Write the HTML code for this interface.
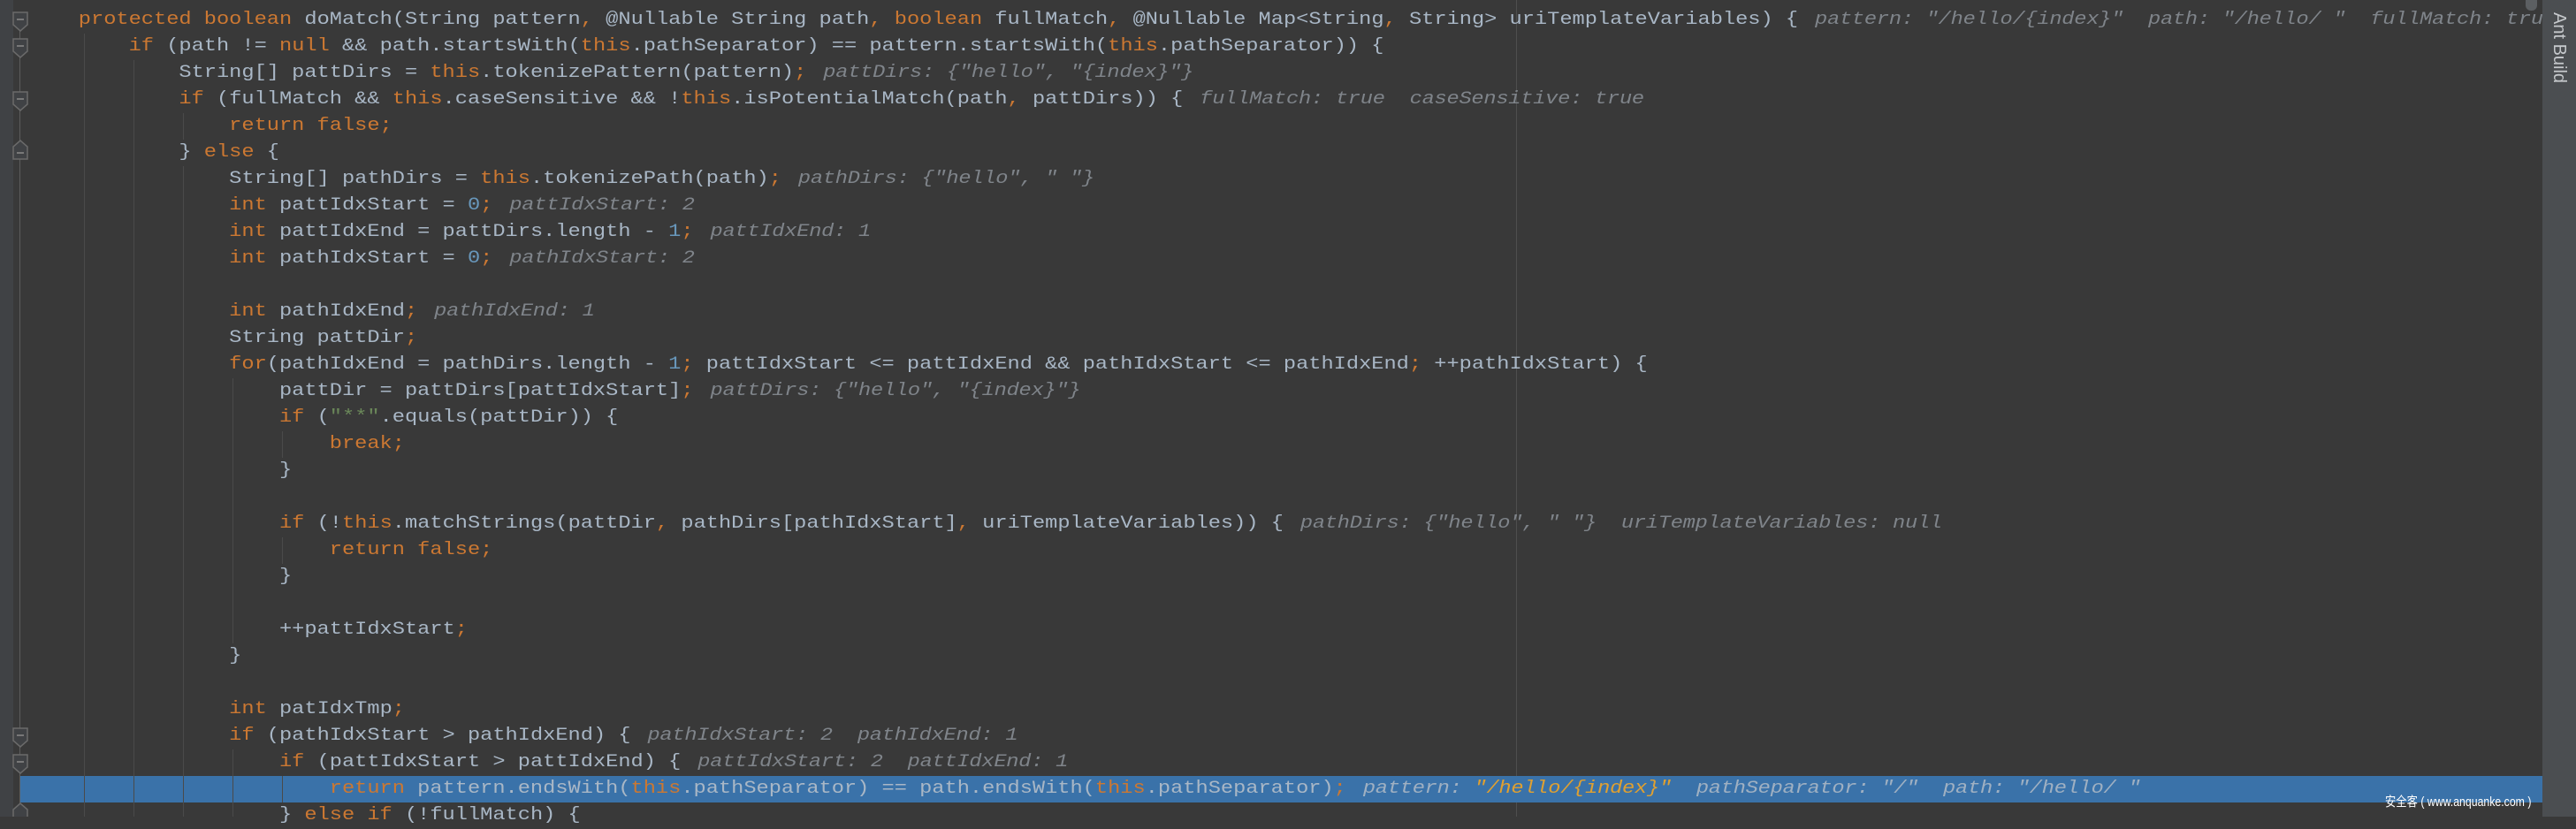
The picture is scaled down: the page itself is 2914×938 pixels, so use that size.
<!DOCTYPE html>
<html><head><meta charset="utf-8"><style>
html,body{margin:0;padding:0;}
body{width:2914px;height:924px;overflow:hidden;background:#393939;position:relative;font-family:"Liberation Mono",monospace;}
#gut{position:absolute;left:0;top:0;width:15px;height:924px;background:#404245;}
#hl{position:absolute;left:23px;top:878px;width:2854px;height:30px;background:#3a72a9;}
.g{position:absolute;width:1px;background:#4a4a4a;}
#code{position:absolute;left:32px;top:8px;transform:scaleX(1.183);transform-origin:0 0;}
.l{position:absolute;left:0;height:30px;line-height:30px;font-size:20px;color:#a9b7c6;white-space:pre;}
.k{color:#cc7832}.n{color:#6897bb}.s{color:#6a8759}
.h{color:#7f848a;font-style:italic;padding-left:4px;letter-spacing:-0.2px}
.hl .h{color:#9fb0c2}.hs{color:#e0a030}
#margin{position:absolute;left:1715px;top:0;width:1px;height:924px;background:#4e4e4e;}
#side{position:absolute;left:2876px;top:0;width:38px;height:924px;background:#4b4e51;}
#side span{position:absolute;left:7px;top:14px;writing-mode:vertical-rl;font-family:"Liberation Sans",sans-serif;font-size:20px;color:#c5c8cb;}
#thumb{position:absolute;left:2857px;top:0;width:13px;height:12px;background:#5c5f62;border-radius:0 0 6px 6px;}
#wm{position:absolute;left:2698px;top:896px;font-family:"Liberation Sans","Noto Sans CJK SC",sans-serif;font-size:15px;color:#fff;transform:scaleX(0.82);transform-origin:0 0;white-space:pre;}
</style></head><body>
<div id="gut"></div>
<div id="margin"></div>
<div id="hl"></div>
<div class="g" style="left:22px;top:24px;height:900px;background:#5d5d5d"></div>
<div class="g" style="left:95px;top:38px;height:886px"></div>
<div class="g" style="left:151px;top:68px;height:856px"></div>
<div class="g" style="left:207px;top:128px;height:30px"></div>
<div class="g" style="left:207px;top:188px;height:736px"></div>
<div class="g" style="left:263px;top:428px;height:300px"></div>
<div class="g" style="left:319px;top:488px;height:30px"></div>
<div class="g" style="left:319px;top:608px;height:30px"></div>
<div class="g" style="left:263px;top:848px;height:76px"></div>
<div class="g" style="left:319px;top:878px;height:30px"></div>
<svg style="position:absolute;left:0;top:0" width="40" height="924">
<g fill="#404245" stroke="#6a6a6a" stroke-width="1.5">
<polygon points="15,14 31,14 31,28 23,35 15,28"/>
<polygon points="15,44 31,44 31,58 23,65 15,58"/>
<polygon points="15,104 31,104 31,118 23,125 15,118"/>
<polygon points="15,166 23,159 31,166 31,180 15,180"/>
<polygon points="15,824 31,824 31,838 23,845 15,838"/>
<polygon points="15,854 31,854 31,868 23,875 15,868"/>
<polygon points="15,916 23,909 31,916 31,930 15,930"/>
</g>
<g stroke="#8a8a8a" stroke-width="1.5">
<line x1="19" y1="22" x2="27" y2="22"/><line x1="19" y1="52" x2="27" y2="52"/><line x1="19" y1="112" x2="27" y2="112"/><line x1="19" y1="173" x2="27" y2="173"/><line x1="19" y1="832" x2="27" y2="832"/><line x1="19" y1="862" x2="27" y2="862"/>
</g></svg>
<div id="code">
<div class="l" style="top:0">    <span class="k">protected boolean</span> doMatch(String pattern<span class="k">,</span> @Nullable String path<span class="k">,</span> <span class="k">boolean</span> fullMatch<span class="k">,</span> @Nullable Map&lt;String<span class="k">,</span> String&gt; uriTemplateVariables) { <span class="h">pattern: "/hello/{index}"  path: "/hello/ "  fullMatch: true</span></div>
<div class="l" style="top:30px">        <span class="k">if</span> (path != <span class="k">null</span> &amp;&amp; path.startsWith(<span class="k">this</span>.pathSeparator) == pattern.startsWith(<span class="k">this</span>.pathSeparator)) {</div>
<div class="l" style="top:60px">            String[] pattDirs = <span class="k">this</span>.tokenizePattern(pattern)<span class="k">;</span> <span class="h">pattDirs: {"hello", "{index}"}</span></div>
<div class="l" style="top:90px">            <span class="k">if</span> (fullMatch &amp;&amp; <span class="k">this</span>.caseSensitive &amp;&amp; !<span class="k">this</span>.isPotentialMatch(path<span class="k">,</span> pattDirs)) { <span class="h">fullMatch: true  caseSensitive: true</span></div>
<div class="l" style="top:120px">                <span class="k">return false;</span></div>
<div class="l" style="top:150px">            } <span class="k">else</span> {</div>
<div class="l" style="top:180px">                String[] pathDirs = <span class="k">this</span>.tokenizePath(path)<span class="k">;</span> <span class="h">pathDirs: {"hello", " "}</span></div>
<div class="l" style="top:210px">                <span class="k">int</span> pattIdxStart = <span class="n">0</span><span class="k">;</span> <span class="h">pattIdxStart: 2</span></div>
<div class="l" style="top:240px">                <span class="k">int</span> pattIdxEnd = pattDirs.length - <span class="n">1</span><span class="k">;</span> <span class="h">pattIdxEnd: 1</span></div>
<div class="l" style="top:270px">                <span class="k">int</span> pathIdxStart = <span class="n">0</span><span class="k">;</span> <span class="h">pathIdxStart: 2</span></div>
<div class="l" style="top:330px">                <span class="k">int</span> pathIdxEnd<span class="k">;</span> <span class="h">pathIdxEnd: 1</span></div>
<div class="l" style="top:360px">                String pattDir<span class="k">;</span></div>
<div class="l" style="top:390px">                <span class="k">for</span>(pathIdxEnd = pathDirs.length - <span class="n">1</span><span class="k">;</span> pattIdxStart &lt;= pattIdxEnd &amp;&amp; pathIdxStart &lt;= pathIdxEnd<span class="k">;</span> ++pathIdxStart) {</div>
<div class="l" style="top:420px">                    pattDir = pattDirs[pattIdxStart]<span class="k">;</span> <span class="h">pattDirs: {"hello", "{index}"}</span></div>
<div class="l" style="top:450px">                    <span class="k">if</span> (<span class="s">"**"</span>.equals(pattDir)) {</div>
<div class="l" style="top:480px">                        <span class="k">break;</span></div>
<div class="l" style="top:510px">                    }</div>
<div class="l" style="top:570px">                    <span class="k">if</span> (!<span class="k">this</span>.matchStrings(pattDir<span class="k">,</span> pathDirs[pathIdxStart]<span class="k">,</span> uriTemplateVariables)) { <span class="h">pathDirs: {"hello", " "}  uriTemplateVariables: null</span></div>
<div class="l" style="top:600px">                        <span class="k">return false;</span></div>
<div class="l" style="top:630px">                    }</div>
<div class="l" style="top:690px">                    ++pattIdxStart<span class="k">;</span></div>
<div class="l" style="top:720px">                }</div>
<div class="l" style="top:780px">                <span class="k">int</span> patIdxTmp<span class="k">;</span></div>
<div class="l" style="top:810px">                <span class="k">if</span> (pathIdxStart &gt; pathIdxEnd) { <span class="h">pathIdxStart: 2  pathIdxEnd: 1</span></div>
<div class="l" style="top:840px">                    <span class="k">if</span> (pattIdxStart &gt; pattIdxEnd) { <span class="h">pattIdxStart: 2  pattIdxEnd: 1</span></div>
<div class="l hl" style="top:870px">                        <span class="k">return</span> pattern.endsWith(<span class="k">this</span>.pathSeparator) == path.endsWith(<span class="k">this</span>.pathSeparator)<span class="k">;</span> <span class="h">pattern: <span class="hs">"/hello/{index}"</span>  pathSeparator: "/"  path: "/hello/ "</span></div>
<div class="l" style="top:900px">                    } <span class="k">else if</span> (!fullMatch) {</div>
</div>
<div id="side"><span>Ant Build</span></div>
<div id="thumb"></div>
<div id="wm">安全客 ( www.anquanke.com )</div>
</body></html>
